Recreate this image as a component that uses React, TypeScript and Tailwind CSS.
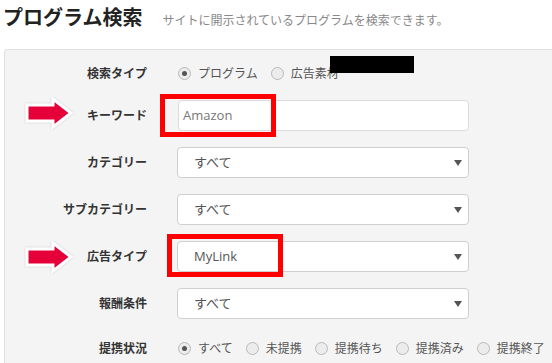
import React from "react";

const font = { fontFamily: '"Open Sans", "Noto Sans CJK JP", sans-serif' };

function Radio({ checked, label, last }: { checked?: boolean; label: string; last?: boolean }) {
  return (
    <span className={`flex items-center ${last ? "" : "mr-[13px]"}`}>
      <span className="w-[13px] h-[13px] rounded-full border border-[#b9b9b9] bg-[#ececec] flex items-center justify-center shrink-0">
        {checked && <span className="w-[5px] h-[5px] rounded-full bg-[#555]" />}
      </span>
      <span className="ml-[7px] text-[12px] text-[#555] whitespace-nowrap">{label}</span>
    </span>
  );
}

function Label({ children }: { children: React.ReactNode }) {
  return (
    <div className="w-[142px] shrink-0 text-right text-[12px] font-bold text-[#333] whitespace-nowrap">
      {children}
    </div>
  );
}

function Select({ value }: { value: string }) {
  return (
    <div className="ml-[30px] w-[292px] h-[31px] bg-white border border-[#cfcfcf] rounded-[4px] flex items-center justify-between pl-[16px] pr-[6px]">
      <span className="text-[13px] text-[#555]">{value}</span>
      <svg width="8" height="6" viewBox="0 0 8 6">
        <polygon points="0,0 8,0 4,6" fill="#555" />
      </svg>
    </div>
  );
}

function Arrow({ top }: { top: number }) {
  return (
    <svg
      className="absolute left-[24px]"
      style={{ top }}
      width="52"
      height="34"
      viewBox="0 0 52 34"
    >
      <polygon
        points="3,8 29,8 29,2 47,16 29,30 29,24 3,24"
        fill="#e6003a"
        stroke="#ffffff"
        strokeWidth="3"
        strokeLinejoin="miter"
        style={{ filter: "drop-shadow(0 0 1px rgba(0,0,0,0.15))" }}
      />
    </svg>
  );
}

export default function App() {
  return (
    <div className="relative w-[552px] h-[363px] overflow-hidden bg-white" style={font}>
      <div className="flex items-baseline pt-[4px] pl-[3px] h-[32px]">
        <h1 className="text-[20px] leading-[28px] font-bold text-[#222]">プログラム検索</h1>
        <span className="ml-[20px] text-[12px] text-[#888]">サイトに開示されているプログラムを検索できます。</span>
      </div>

      <div className="mt-[17px] ml-[4px] w-[600px] h-[400px] bg-[#f4f4f4] border border-[#e0e0e0] rounded-tl-[3px]">
        <div className="flex flex-col pt-[8px]">
          <div className="flex items-center h-[31px]">
            <Label>検索タイプ</Label>
            <div className="ml-[31px] flex items-center">
              <Radio checked label="プログラム" />
              <Radio label="広告素材" />
            </div>
          </div>

          <div className="flex items-center h-[31px] mt-[11px]">
            <Label>キーワード</Label>
            <div className="ml-[31px] w-[291px] h-[31px] bg-white border border-[#dcdcdc] rounded-[4px] flex items-center pl-[4px]">
              <span className="text-[13px] text-[#777]">Amazon</span>
            </div>
          </div>

          <div className="flex flex-col gap-[16px] mt-[16px]">
            <div className="flex items-center h-[31px]">
              <Label>カテゴリー</Label>
              <Select value="すべて" />
            </div>
            <div className="flex items-center h-[31px]">
              <Label>サブカテゴリー</Label>
              <Select value="すべて" />
            </div>
            <div className="flex items-center h-[31px]">
              <Label>広告タイプ</Label>
              <Select value="MyLink" />
            </div>
            <div className="flex items-center h-[31px]">
              <Label>報酬条件</Label>
              <Select value="すべて" />
            </div>
          </div>

          <div className="flex items-center h-[31px] mt-[14px]">
            <Label>提携状況</Label>
            <div className="ml-[31px] flex items-center">
              <Radio checked label="すべて" />
              <Radio label="未提携" />
              <Radio label="提携待ち" />
              <Radio label="提携済み" />
              <Radio label="提携終了" last />
            </div>
          </div>
        </div>
      </div>

      {/* annotations */}
      <div className="absolute left-[330px] top-[56px] w-[84px] h-[17px] bg-black" />
      <Arrow top={97} />
      <Arrow top={241} />
      <div className="absolute left-[160px] top-[94px] w-[116px] h-[43px] border-[5px] border-[#ff0000]" />
      <div className="absolute left-[167px] top-[234px] w-[116px] h-[43px] border-[5px] border-[#ff0000]" />
    </div>
  );
}
